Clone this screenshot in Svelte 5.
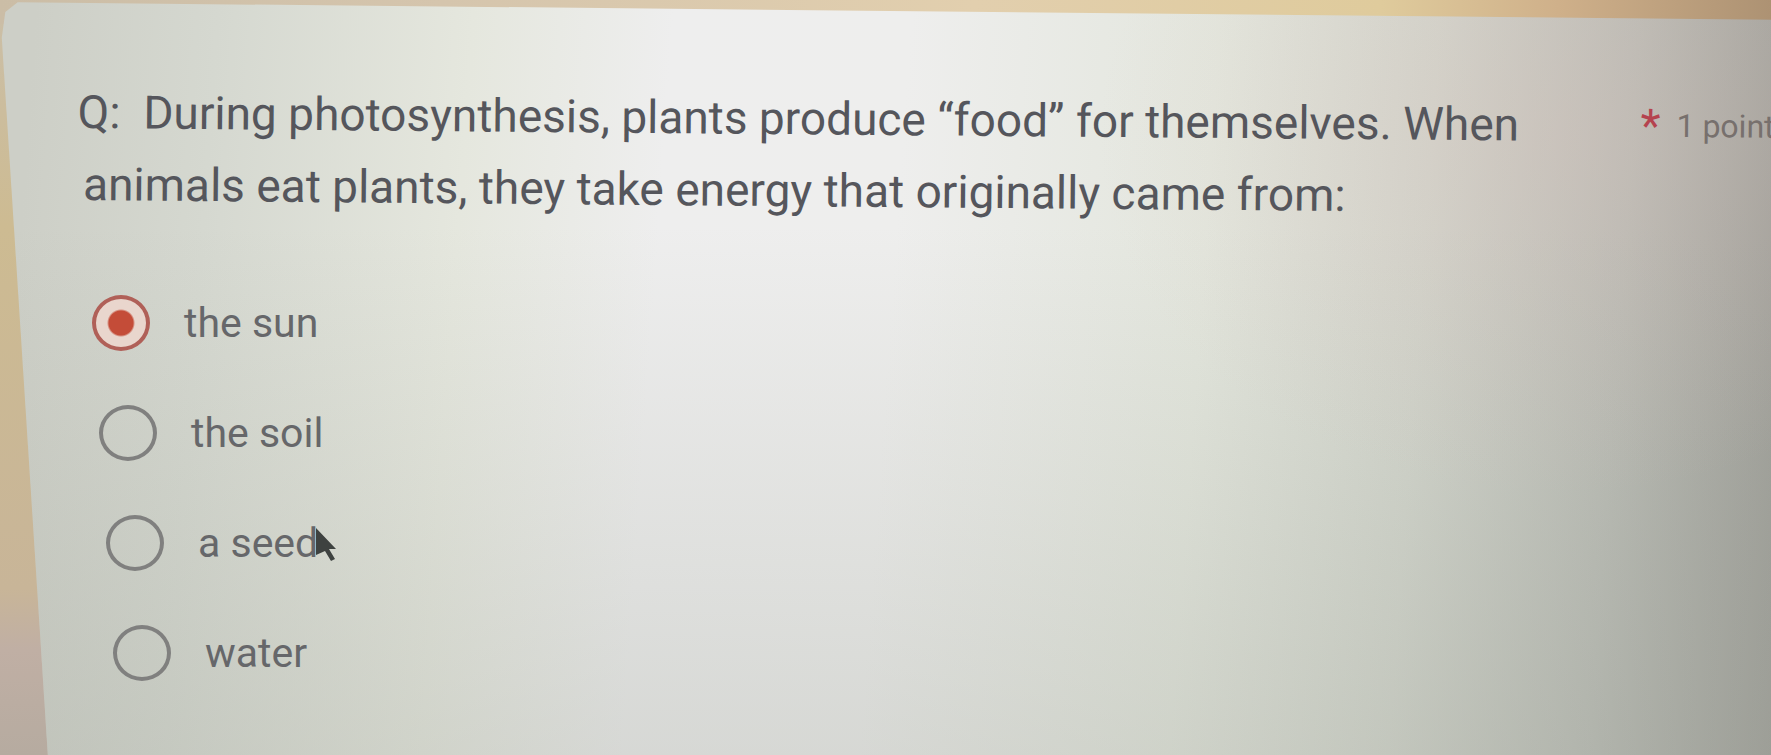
<script>
	const options = ['the sun', 'the soil', 'a seed', 'water'];
	let selected = 'the sun';
</script>

<main class="screen">
	<form class="card">
		<fieldset aria-labelledby="question">
			<!-- Question -->
			<div class="header">
				<h1 id="question">
					Q:&nbsp; During photosynthesis, plants produce “food” for themselves. When animals eat plants, they take energy that originally came from:
				</h1>
				<span class="required">*</span>
				<span class="points">1 point</span>
			</div>
			<!-- Options -->
			<div class="options">
				{#each options as option, i}
					<label class="option" style="--row: {i}">
						<input type="radio" name="answer" value={option} bind:group={selected} />
						<span class="option-text">
							{option}
							{#if option === 'a seed'}
								<svg class="pointer" viewBox="0 0 22 36" aria-hidden="true">
									<path d="M1 1 L21 22 L14 22 L20 32 L16 34 L10 24 L1 28 Z" />
								</svg>
							{/if}
						</span>
					</label>
				{/each}
			</div>
		</fieldset>
	</form>
</main>

<style>
	:global(body) {
		background: #c8b99f;
	}

	.screen {
		min-height: 100vh;
		overflow: hidden;
		background:
			linear-gradient(90deg, #cbbda6 0%, #d5c5ad 25%, #e2cfae 55%, #dfcb9c 78%, #cfb08a 88%, #ad9273 100%) top / 100% 24px no-repeat,
			linear-gradient(180deg, #cbbfa8 0%, #cdbb92 30%, #c8b598 78%, #c0afa4 86%, #b6aba0 100%);
		font-family: Roboto, 'Liberation Sans', sans-serif;
	}

	.card {
		box-sizing: border-box;
		min-height: 100vh;
		padding: 76px 0 32px 84px;
		clip-path: polygon(1% 0.3%, 100% 2.6%, 100% 100%, 2.7% 100%, 0.1% 5%, 0.3% 1.6%);
		background:
			radial-gradient(ellipse 26% 48% at 88% 18%, rgba(218, 190, 185, 0.3), rgba(218, 190, 185, 0) 100%),
			linear-gradient(180deg, rgba(160, 165, 155, 0) 30%, rgba(160, 165, 155, 0.3) 100%),
			linear-gradient(94deg, #cdcfc7 2%, #d5d8d0 12%, #e5e7de 26%, #eeeeee 37%, #eeeeed 50%, #e3e6dd 67%, #d2d5cc 79%, #b9bbb4 90%, #9c9c96 100%);
	}

	fieldset {
		margin: 0;
		padding: 0;
		border: 0;
		min-width: 0;
	}

	.header {
		display: flex;
		margin-right: -4px;
		rotate: 0.5deg;
		transform-origin: left top;
	}

	h1 {
		flex: 1;
		max-width: 1500px;
		margin: 0 auto 0 0;
		color: #55565c;
		font-size: 46px;
		font-weight: 400;
		line-height: 72px;
		text-indent: -6px;
	}

	.required {
		margin-left: 24px;
		color: #b5434f;
		font-size: 46px;
		line-height: 72px;
	}

	.points {
		margin-left: 16px;
		color: #77706d;
		font-size: 32px;
		line-height: 72px;
		white-space: nowrap;
	}

	.options {
		display: flex;
		flex-direction: column;
		margin-top: 48px;
	}

	.option {
		display: flex;
		align-items: center;
		gap: 34px;
		height: 110px;
		/* each row steps right with the slanted edge of the card */
		margin-left: calc(8px + var(--row) * 7px);
		color: #66676a;
		font-size: 41px;
		cursor: pointer;
	}

	input {
		appearance: none;
		flex: none;
		width: 58px;
		height: 56px;
		margin: 0;
		border: 4px solid #80807f;
		border-radius: 50%;
	}

	input:checked {
		border-color: #b06058;
		background: radial-gradient(circle, #c44c38 12px, #e9d6cd 14px);
	}

	.option-text {
		position: relative;
	}

	.pointer {
		position: absolute;
		right: -19px;
		top: 8px;
		width: 22px;
		height: 36px;
		fill: #3e4240;
	}
</style>
